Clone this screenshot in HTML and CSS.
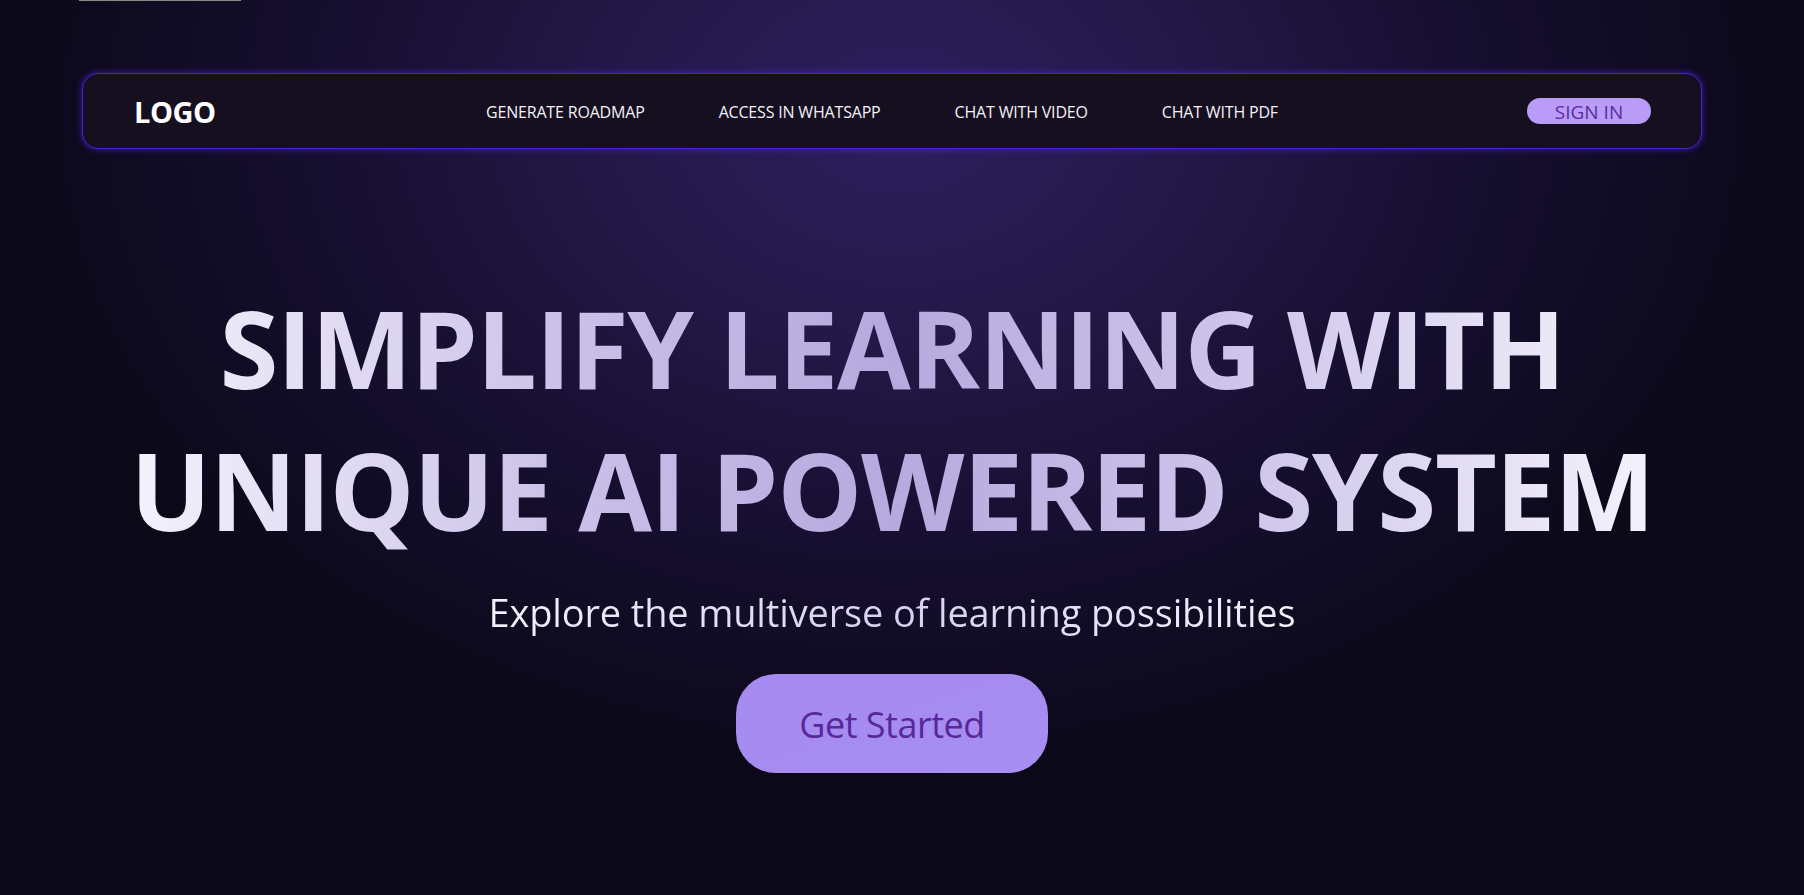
FILE: index.html
```html
<!DOCTYPE html>
<html lang="en">
<head>
<meta charset="utf-8">
<title>Simplify Learning</title>
<link rel="stylesheet" href="styles.css">
</head>
<body>
<div class="page">
  <div class="topline"></div>
  <nav class="navbar">
    <div class="logo">LOGO</div>
    <ul class="links">
      <li><a href="#">GENERATE ROADMAP</a></li>
      <li><a href="#">ACCESS IN WHATSAPP</a></li>
      <li><a href="#">CHAT WITH VIDEO</a></li>
      <li><a href="#">CHAT WITH PDF</a></li>
    </ul>
    <a class="signin" href="#">SIGN IN</a>
  </nav>
  <main class="hero">
    <h1 class="title">SIMPLIFY LEARNING WITH<br>UNIQUE AI POWERED SYSTEM</h1>
    <p class="subtitle">Explore the multiverse of learning possibilities</p>
    <a class="cta" href="#">Get Started</a>
  </main>
</div>
</body>
</html>
```

FILE: styles.css
```css
* { box-sizing: border-box; }
html, body { margin: 0; padding: 0; }
body {
  min-height: 895px;
  background-color: #0b0817;
  background-image: radial-gradient(ellipse 920px 680px at 900px 120px, #2d1f5f 0%, #241949 30%, #160f30 62%, #0b0817 100%);
  font-family: "Open Sans", "Noto Sans", sans-serif;
  color: #fff;
  overflow: hidden;
}
.page { width: 1784px; }
.topline {
  margin-left: 79px;
  width: 162px;
  height: 1px;
  background: #8a8a8a;
}
.navbar {
  margin: 72px 82px 0;
  height: 76px;
  padding: 0 50px 0 51px;
  display: flex;
  align-items: center;
  background: #160f1f;
  border: 1.5px solid #4b1fd4;
  border-radius: 16px;
  box-shadow: 0 0 7px rgba(80, 34, 220, 0.75);
}
.logo {
  width: 352px;
  font-size: 29px;
  font-weight: 700;
  letter-spacing: -0.5px;
  color: #fff;
}
.links {
  display: flex;
  gap: 74px;
  list-style: none;
  margin: 0;
  padding: 2px 0 0;
}
.links a {
  color: #f4f2fa;
  text-decoration: none;
  font-size: 16px;
  letter-spacing: -0.18px;
}
.signin {
  margin-left: auto;
  width: 124px;
  height: 26px;
  line-height: 28px;
  text-align: center;
  border-radius: 13px;
  background: #b89cf7;
  color: #5c2b9e;
  text-decoration: none;
  font-size: 19px;
}
.hero {
  display: flex;
  flex-direction: column;
  align-items: center;
  padding-top: 128px;
}
.title {
  margin: 0;
  text-align: center;
  font-size: 107px;
  line-height: 142px;
  font-weight: 700;
  letter-spacing: -1.3px;
  background: linear-gradient(90deg, #f4f2fb 0%, #c9bfe8 30%, #b6a9de 50%, #cdc4ea 72%, #f4f2fb 100%);
  -webkit-background-clip: text;
  background-clip: text;
  color: transparent;
}
.subtitle {
  margin: 25px 0 0;
  font-size: 38px;
  line-height: 52px;
  letter-spacing: -0.15px;
  background: linear-gradient(90deg, #f3f1fb 0%, #d8d0f0 50%, #f3f1fb 100%);
  -webkit-background-clip: text;
  background-clip: text;
  color: transparent;
}
.cta {
  margin-top: 36px;
  width: 312px;
  padding: 27px 0 25px;
  line-height: 47px;
  font-size: 36px;
  text-align: center;
  border-radius: 40px;
  background: linear-gradient(160deg, #a58aef 0%, #a78ef2 100%);
  color: #58289a;
  text-decoration: none;
  letter-spacing: -0.5px;
}
```
